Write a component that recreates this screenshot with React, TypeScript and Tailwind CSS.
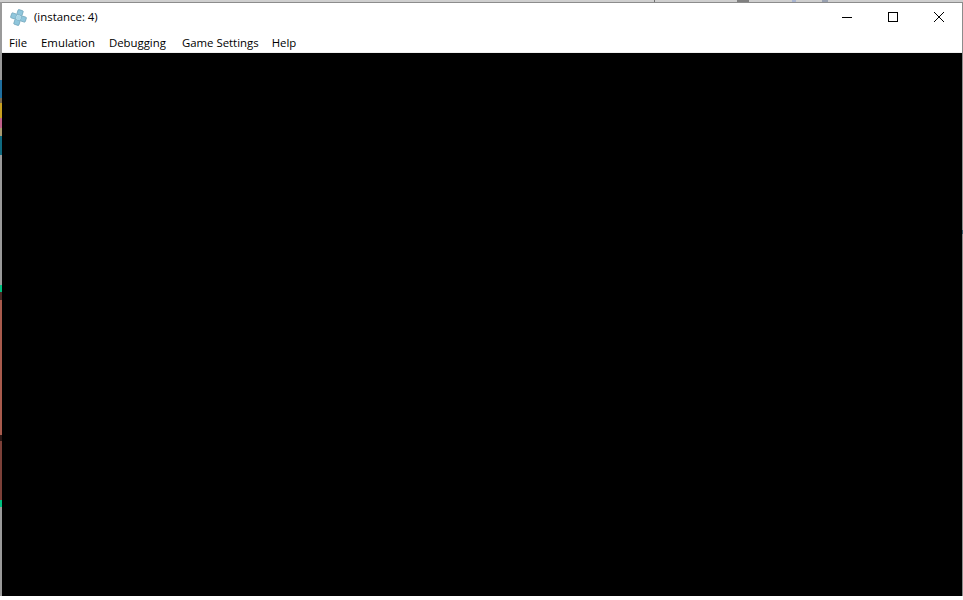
const menus = [
  { label: "File", cls: "" },
  { label: "Emulation", cls: "" },
  { label: "Debugging", cls: "mr-[2px]" },
  { label: "Game Settings", cls: "mr-[-1px]" },
  { label: "Help", cls: "" },
];

// bits of the windows behind, showing along the left edge
const leftEdge = [
  { h: "h-[78px]", bg: "bg-[#9a9a9a]" },
  { h: "h-[18px]", bg: "bg-[#1f6f9f]" },
  { h: "h-[5px]", bg: "bg-[#7a6a50]" },
  { h: "h-[15px]", bg: "bg-[#c8a020]" },
  { h: "h-[10px]", bg: "bg-[#c0608a]" },
  { h: "h-[8px]", bg: "bg-[#a89a70]" },
  { h: "h-[19px]", bg: "bg-[#0f6a80]" },
  { h: "h-[130px]", bg: "bg-[#9a9a9a]" },
  { h: "h-[7px]", bg: "bg-[#00c080]" },
  { h: "h-[8px]", bg: "bg-[#4a2a25]" },
  { h: "h-[135px]", bg: "bg-[#a85a4c]" },
  { h: "h-[6px]", bg: "bg-[#2a1512]" },
  { h: "h-[59px]", bg: "bg-[#7c4038]" },
  { h: "h-[7px]", bg: "bg-[#00c080]" },
  { h: "h-[89px]", bg: "bg-[#9a9a9a]" },
];

function AppIcon() {
  return (
    <svg width="17" height="17" viewBox="0 0 17 17">
      <g fill="#8fc6dc" stroke="#6da2b8" strokeWidth="0.7" transform="rotate(18 8.5 8.5)">
        <rect x="5.8" y="0.8" width="5.4" height="5.2" rx="0.8" />
        <rect x="0.8" y="5.9" width="5.2" height="5.2" rx="0.8" />
        <rect x="11" y="5.9" width="5.2" height="5.2" rx="0.8" />
        <rect x="5.8" y="11" width="5.4" height="5.2" rx="0.8" />
      </g>
      <circle cx="8.5" cy="8.5" r="2.6" fill="#a9d5e6" />
    </svg>
  );
}

export default function App() {
  return (
    <div className="h-[600px] w-[963px] overflow-hidden bg-white font-['Open_Sans','Noto_Sans',sans-serif] text-black">
      <div className="flex h-[2px] bg-[#cfcfcf]">
        <div className="ml-[654px] w-px bg-[#707070]" />
        <div className="ml-[82px] w-[12px] bg-[#808080]" />
        <div className="ml-[43px] w-[4px] bg-[#a8b4d0]" />
        <div className="ml-[26px] w-[6px] bg-[#98a0b0]" />
      </div>
      <div className="flex h-[594px]">
        <div className="flex w-[2px] shrink-0 flex-col">
          {leftEdge.map((s, i) => (
            <div key={i} className={`${s.h} ${s.bg}`} />
          ))}
        </div>
        <div className="flex min-w-0 flex-1 flex-col">
          <div className="h-px shrink-0 bg-[#8c8c8c]" />
          <div className="flex h-[28px] shrink-0 items-center pl-[8px]">
            <AppIcon />
            <span className="ml-[7px] text-[11.4px]">(instance: 4)</span>
            <div className="ml-auto flex">
              <button className="flex h-[28px] w-[46px] items-center justify-center">
                <svg width="10" height="10" viewBox="0 0 10 10">
                  <path d="M0 5.5h10" stroke="black" />
                </svg>
              </button>
              <button className="flex h-[28px] w-[46px] items-center justify-center">
                <svg width="10" height="10" viewBox="0 0 10 10">
                  <rect x="0.5" y="0.5" width="9" height="9" fill="none" stroke="black" />
                </svg>
              </button>
              <button className="flex h-[28px] w-[46px] items-center justify-center">
                <svg width="10" height="10" viewBox="0 0 10 10">
                  <path d="M0 0l10 10M10 0L0 10" stroke="black" />
                </svg>
              </button>
            </div>
          </div>
          <div className="flex h-[22px] shrink-0 items-center gap-[14px] border-b border-[#f0f0f0] pl-[7px] pt-[2px] text-[11.4px]">
            {menus.map((m) => (
              <span key={m.label} className={m.cls}>
                {m.label}
              </span>
            ))}
          </div>
          <div className="flex-1 bg-black" />
        </div>
        <div className="flex w-px shrink-0 flex-col bg-[#8c8c8c]">
          <div className="mt-[228px] h-[4px] bg-[#3a5a6a]" />
        </div>
      </div>
    </div>
  );
}
